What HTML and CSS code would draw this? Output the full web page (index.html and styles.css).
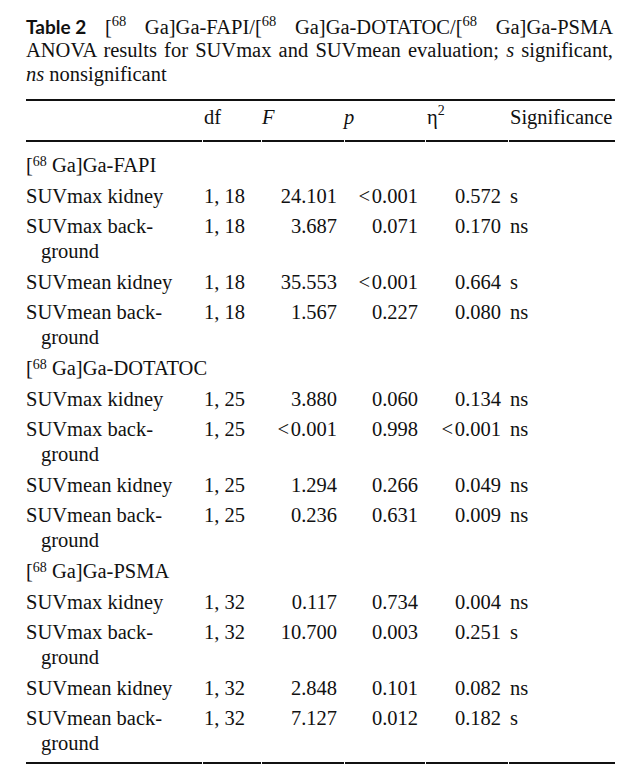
FILE: index.html
```html
<!DOCTYPE html>
<html lang="en">
<head>
<meta charset="utf-8">
<title>Table 2</title>
<link rel="stylesheet" href="styles.css">
</head>
<body>
<div class="page">
  <div class="caption">
    <div class="cap-line justify"><span class="label">Table 2</span> [<sup class="cap-sup">68</sup> Ga]Ga-FAPI/[<sup class="cap-sup">68</sup> Ga]Ga-DOTATOC/[<sup class="cap-sup">68</sup> Ga]Ga-PSMA</div>
    <div class="cap-line justify">ANOVA results for SUVmax and SUVmean evaluation; <i>s</i> significant,</div>
    <div class="cap-line"><i>ns</i> nonsignificant</div>
  </div>
  <div class="table-wrap">
    <table class="anova">
      <colgroup>
        <col class="c-lbl"><col class="c-df"><col class="c-f"><col class="c-p"><col class="c-eta"><col class="c-sig">
      </colgroup>
      <thead>
        <tr>
          <th class="lbl"></th>
          <th class="df">df</th>
          <th class="hf"><i>F</i></th>
          <th class="hp"><i>p</i></th>
          <th class="heta">η<sup class="head-sup">2</sup></th>
          <th class="sig">Significance</th>
        </tr>
      </thead>
      <tbody>
        <tr class="first"><td class="grp" colspan="6">[<sup class="row-sup">68</sup> Ga]Ga-FAPI</td></tr>
        <tr><td class="lbl">SUVmax kidney</td><td class="df">1, 18</td><td class="num">24.101</td><td class="num">&lt;&#8202;0.001</td><td class="num">0.572</td><td class="sig">s</td></tr>
        <tr><td class="lbl">SUVmax back-<br>ground</td><td class="df">1, 18</td><td class="num">3.687</td><td class="num">0.071</td><td class="num">0.170</td><td class="sig">ns</td></tr>
        <tr><td class="lbl">SUVmean kidney</td><td class="df">1, 18</td><td class="num">35.553</td><td class="num">&lt;&#8202;0.001</td><td class="num">0.664</td><td class="sig">s</td></tr>
        <tr><td class="lbl">SUVmean back-<br>ground</td><td class="df">1, 18</td><td class="num">1.567</td><td class="num">0.227</td><td class="num">0.080</td><td class="sig">ns</td></tr>

        <tr><td class="grp" colspan="6">[<sup class="row-sup">68</sup> Ga]Ga-DOTATOC</td></tr>
        <tr><td class="lbl">SUVmax kidney</td><td class="df">1, 25</td><td class="num">3.880</td><td class="num">0.060</td><td class="num">0.134</td><td class="sig">ns</td></tr>
        <tr><td class="lbl">SUVmax back-<br>ground</td><td class="df">1, 25</td><td class="num">&lt;&#8202;0.001</td><td class="num">0.998</td><td class="num">&lt;&#8202;0.001</td><td class="sig">ns</td></tr>
        <tr><td class="lbl">SUVmean kidney</td><td class="df">1, 25</td><td class="num">1.294</td><td class="num">0.266</td><td class="num">0.049</td><td class="sig">ns</td></tr>
        <tr><td class="lbl">SUVmean back-<br>ground</td><td class="df">1, 25</td><td class="num">0.236</td><td class="num">0.631</td><td class="num">0.009</td><td class="sig">ns</td></tr>

        <tr><td class="grp" colspan="6">[<sup class="row-sup">68</sup> Ga]Ga-PSMA</td></tr>
        <tr><td class="lbl">SUVmax kidney</td><td class="df">1, 32</td><td class="num">0.117</td><td class="num">0.734</td><td class="num">0.004</td><td class="sig">ns</td></tr>
        <tr><td class="lbl">SUVmax back-<br>ground</td><td class="df">1, 32</td><td class="num">10.700</td><td class="num">0.003</td><td class="num">0.251</td><td class="sig">s</td></tr>
        <tr><td class="lbl">SUVmean kidney</td><td class="df">1, 32</td><td class="num">2.848</td><td class="num">0.101</td><td class="num">0.082</td><td class="sig">ns</td></tr>
        <tr class="last"><td class="lbl">SUVmean back-<br>ground</td><td class="df">1, 32</td><td class="num">7.127</td><td class="num">0.012</td><td class="num">0.182</td><td class="sig">s</td></tr>
      </tbody>
    </table>
  </div>
</div>
</body>
</html>
```

FILE: styles.css
```css
html, body {
  margin: 0;
  padding: 0;
  background: #ffffff;
}

body {
  color: #111111;
  font-family: "Liberation Serif", "Times New Roman", serif;
  font-size: 20.5px;
}

.page {
  padding: 14.7px 0 0 26px;
  width: 589px;
}

.caption {
  width: 587px;
  line-height: 23.5px;
}

.cap-line.justify {
  text-align: justify;
  text-align-last: justify;
}

.label {
  display: inline-block;
  font-family: Lato, "Liberation Sans", sans-serif;
  font-weight: 700;
  font-size: 19px;
  line-height: 23.5px;
}

.cap-sup {
  font-size: 14.5px;
  line-height: 0;
  vertical-align: 8px;
}

.row-sup {
  font-size: 14px;
  line-height: 0;
  vertical-align: 6px;
}

.head-sup {
  font-size: 14px;
  line-height: 0;
  vertical-align: 9px;
}

.table-wrap {
  width: 589px;
  margin-top: 12.8px;
  border-top: 2px solid #111111;
}

.anova {
  border-collapse: separate;
  border-spacing: 1px 0;
  table-layout: fixed;
  width: 591px;
  margin-left: -1px;
}

.c-lbl { width: 176px; }
.c-df { width: 58px; }
.c-f { width: 82px; }
.c-p { width: 80px; }
.c-eta { width: 82px; }
.c-sig { width: 106px; }

.anova th,
.anova td {
  padding: 2.8px 0;
  line-height: 25px;
  font-weight: normal;
  text-align: left;
  vertical-align: top;
  white-space: nowrap;
}

.anova thead th {
  padding: 4.5px 0 9.5px;
  border-bottom: 2px solid #111111;
}

.anova tr.first td {
  padding-top: 11px;
}

.anova tr.last td {
  padding-bottom: 6px;
  border-bottom: 2px solid #111111;
}

.anova .lbl {
  padding-left: 15px;
  text-indent: -15px;
}

.anova .df {
  padding-left: 1px;
}

.anova .hp {
  text-indent: -1px;
}

.anova .heta {
  padding-left: 1px;
}

.anova .num {
  text-align: right;
  padding-right: 7px;
}

.anova .sig {
  padding-left: 1px;
}
```
